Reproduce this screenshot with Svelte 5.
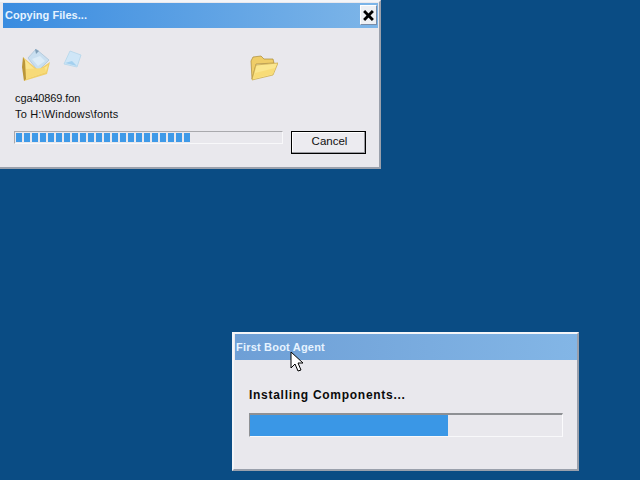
<script>
    const segments = Array.from({ length: 22 });
</script>

<div class="desktop">
    <section class="window copying">
        <header class="titlebar">
            <span>Copying Files...</span>
            <button class="close" aria-label="Close">
                <svg width="11" height="11" viewBox="0 0 10 10">
                    <path d="M1 1 L9 9 M9 1 L1 9" stroke="#000" stroke-width="2.6" fill="none" />
                </svg>
            </button>
        </header>
        <div class="body">
            <div class="animation">
                <svg class="open-folder" width="32" height="35" viewBox="0 0 32 35">
                    <path d="M8 11 L16 2 L29 13 L18 24 Z" fill="#c9dff0" stroke="#a8c2d6" stroke-width=".7" />
                    <path d="M15 2 L19 4 L16 7 Z" fill="#7f9fb8" />
                    <path d="M12 12 L20 9 L25 14 L18 19 Z" fill="#dcecf7" />
                    <path d="M3 10 L18 23 L30 15 L27 27 L4 34 Z" fill="#f0cf6a" />
                    <path d="M5 13 L18 25 L28 18 L26 25 L6 32 Z" fill="#fbe68f" />
                    <path d="M5 22 L25 21 L26 25 L6 32 Z" fill="#f7da78" />
                    <path d="M3 10 L2 20 L4 34 L6 32 L5 14 Z" fill="#bb9638" />
                </svg>
                <svg class="paper" width="20" height="20" viewBox="0 0 20 20">
                    <path d="M8 1 L19 5 L15 17 L2 14 Z" fill="#cfe6f7" stroke="#b4d5ea" stroke-width=".8" />
                    <path d="M3 13 L10 11 L15 16 Z" fill="#a3d0ef" />
                </svg>
                <svg class="folder" width="28" height="26" viewBox="0 0 28 26">
                    <path d="M1 6 L3 2 L11 1 L14 4 L23 4 L24 8 L6 9 L2 24 Z" fill="#efcd68" stroke="#ab8a35" stroke-width=".7" />
                    <path d="M6 10 L28 8 L23 20 L2 25 Z" fill="#fbe78f" stroke="#c9a53f" stroke-width=".7" />
                    <path d="M5 18 L25 13 L23 19 L3 24 Z" fill="#f8dc78" />
                </svg>
            </div>
            <p class="file name">cga40869.fon</p>
            <p class="file dest">To H:\Windows\fonts</p>
            <div class="actions">
                <div class="track">
                    {#each segments as _}
                        <i></i>
                    {/each}
                </div>
                <button class="cancel">Cancel</button>
            </div>
        </div>
    </section>

    <section class="window agent">
        <header class="titlebar">First Boot Agent</header>
        <div class="agent-body">
            <h1>Installing Components...</h1>
            <div class="bar"><div class="fill" style="width: 198px"></div></div>
        </div>
    </section>

    <svg class="cursor" width="14" height="21" viewBox="0 0 14 21">
        <path d="M1 1 V17 L5 13 L8 20 L11 19 L8 12 L13 12 Z" fill="#fff" stroke="#000" stroke-width="1" />
    </svg>
</div>

<style>
    :global(body) {
        margin: 0;
    }

    .desktop {
        position: relative;
        width: 640px;
        height: 480px;
        overflow: hidden;
        background-color: #0a4c84;
        font-family: "Liberation Sans", Arial, sans-serif;
    }

    .window {
        position: absolute;
        box-sizing: border-box;
        background-color: #e9e8ed;
        border: 2px solid;
        border-color: #f4f5f8 #9aa0ac #9aa0ac #f4f5f8;
    }

    .copying {
        left: -2px;
        top: 0;
        width: 383px;
        height: 169px;
        padding: 1px 1px 0 3px;
    }

    .agent {
        left: 232px;
        top: 332px;
        width: 347px;
        height: 139px;
        padding: 0 0 0 1px;
    }

    .titlebar {
        display: flex;
        align-items: center;
        justify-content: space-between;
        box-sizing: border-box;
        height: 25px;
        padding: 0 1px 1px 2px;
        color: #e6f3ff;
        font-size: 11px;
        font-weight: bold;
        letter-spacing: .05px;
        background: linear-gradient(90deg, #3a8ce0, #7db5e8);
    }

    .agent .titlebar {
        height: 26px;
        padding-left: 1px;
        letter-spacing: .2px;
        background: linear-gradient(90deg, #6e9fd6, #83b6e6);
    }

    .close {
        display: flex;
        align-items: center;
        justify-content: center;
        width: 17px;
        height: 20px;
        padding: 0;
        background: #eef0f4;
        border: 1px solid;
        border-color: #fff #7a8ca6 #7a8ca6 #fff;
    }

    .body {
        padding-left: 11px;
        padding-right: 12px;
    }

    .animation {
        position: relative;
        height: 64px;
    }

    .open-folder {
        position: absolute;
        left: 6px;
        top: 19px;
    }

    .paper {
        position: absolute;
        left: 48px;
        top: 22px;
    }

    .folder {
        position: absolute;
        left: 236px;
        top: 27px;
    }

    .file {
        margin: 0 0 3px 1px;
        height: 13px;
        line-height: 13px;
        font-size: 11px;
        color: #111;
    }

    .name {
        letter-spacing: -.12px;
    }

    .dest {
        letter-spacing: .17px;
    }

    .actions {
        display: flex;
        justify-content: space-between;
        margin-top: 10px;
    }

    .track {
        display: flex;
        gap: 2px;
        box-sizing: border-box;
        width: 269px;
        height: 13px;
        padding: 1px;
        border: 1px solid;
        border-color: #a9a9ad #f8f8fa #f8f8fa #a9a9ad;
    }

    .track i {
        width: 6px;
        height: 9px;
        background-color: #3f9ae8;
    }

    .cancel {
        box-sizing: border-box;
        width: 75px;
        height: 23px;
        padding: 0 0 3px 2px;
        color: #111;
        font: 11.5px "Liberation Sans", Arial, sans-serif;
        background: #ecebf0;
        border: 1px solid #000;
        box-shadow: inset -1px -1px 0 #9a9aa0, inset 1px 1px 0 #fff;
    }

    .agent-body {
        padding: 28px 15px 0 14px;
    }

    h1 {
        margin: 0 0 11px;
        height: 14px;
        line-height: 14px;
        font-size: 12px;
        font-weight: bold;
        letter-spacing: .72px;
        color: #0b0b0b;
    }

    .bar {
        box-sizing: border-box;
        width: 314px;
        height: 24px;
        border: 1px solid;
        border-color: #8e9094 #fbfbfd #f8f8fa #8e9094;
        border-top-width: 2px;
    }

    .fill {
        height: 100%;
        background-color: #3a97e6;
    }

    .cursor {
        position: absolute;
        left: 290px;
        top: 351px;
    }
</style>
